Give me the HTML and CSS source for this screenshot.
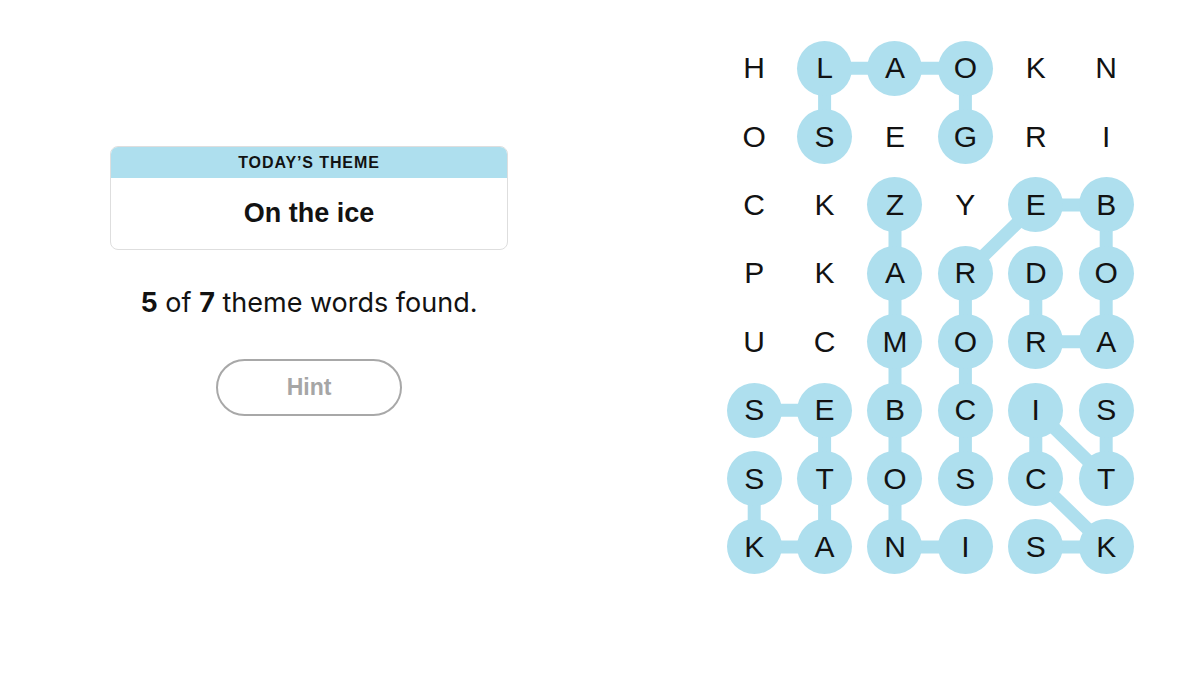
FILE: index.html
```html
<!DOCTYPE html>
<html lang="en">
<head>
<meta charset="utf-8">
<title>Strands</title>
<link rel="stylesheet" href="styles.css">
</head>
<body>
<main class="game">
  <section class="side">
    <div class="theme-card">
      <div class="theme-head">TODAY’S THEME</div>
      <div class="theme-body">On the ice</div>
    </div>
    <p class="progress"><b>5</b> of <b>7</b> theme words found.</p>
    <button class="hint" type="button">Hint</button>
  </section>
  <section class="board-wrap">
    <div class="board">
      <svg class="links" width="422.4" height="547.2" viewBox="0 0 422.4 547.2" aria-hidden="true">
        <g fill="none" stroke="#aedfee" stroke-width="13" stroke-linejoin="round" stroke-linecap="round">
          <polyline points="246.4,102.6 246.4,34.2 105.6,34.2 105.6,102.6"/>
          <polyline points="176,171 176,513 246.4,513"/>
          <polyline points="35.2,444.6 35.2,513 105.6,513 105.6,376.2 35.2,376.2"/>
          <polyline points="246.4,444.6 246.4,239.4 316.8,171 387.2,171 387.2,307.8 316.8,307.8 316.8,239.4"/>
          <polyline points="387.2,376.2 387.2,444.6 316.8,376.2 316.8,444.6 387.2,513 316.8,513"/>
        </g>
      </svg>
      <div class="grid">
        <span class="cell">H</span><span class="cell on">L</span><span class="cell on">A</span><span class="cell on">O</span><span class="cell">K</span><span class="cell">N</span>
        <span class="cell">O</span><span class="cell on">S</span><span class="cell">E</span><span class="cell on">G</span><span class="cell">R</span><span class="cell">I</span>
        <span class="cell">C</span><span class="cell">K</span><span class="cell on">Z</span><span class="cell">Y</span><span class="cell on">E</span><span class="cell on">B</span>
        <span class="cell">P</span><span class="cell">K</span><span class="cell on">A</span><span class="cell on">R</span><span class="cell on">D</span><span class="cell on">O</span>
        <span class="cell">U</span><span class="cell">C</span><span class="cell on">M</span><span class="cell on">O</span><span class="cell on">R</span><span class="cell on">A</span>
        <span class="cell on">S</span><span class="cell on">E</span><span class="cell on">B</span><span class="cell on">C</span><span class="cell on">I</span><span class="cell on">S</span>
        <span class="cell on">S</span><span class="cell on">T</span><span class="cell on">O</span><span class="cell on">S</span><span class="cell on">C</span><span class="cell on">T</span>
        <span class="cell on">K</span><span class="cell on">A</span><span class="cell on">N</span><span class="cell on">I</span><span class="cell on">S</span><span class="cell on">K</span>
      </div>
    </div>
  </section>
</main>
</body>
</html>
```
FILE: styles.css
```css
* { box-sizing: border-box; }
html, body { margin: 0; padding: 0; background: #fff; }
body {
  font-family: "Inter", "Liberation Sans", sans-serif;
  color: #121212;
  width: 1200px;
  height: 675px;
  overflow: hidden;
}
.game {
  display: flex;
  height: 675px;
}
.side {
  width: 618px;
  display: flex;
  flex-direction: column;
  align-items: center;
  padding-top: 146px;
}
.theme-card {
  width: 398px;
  border: 1px solid #dedede;
  border-radius: 8px;
  overflow: hidden;
}
.theme-head {
  height: 31px;
  background: #aedfee;
  display: flex;
  align-items: center;
  justify-content: center;
  font-family: "Liberation Sans", sans-serif;
  font-weight: 700;
  font-size: 16px;
  letter-spacing: 0.9px;
  color: #121212;
  margin: 0 -1px;
}
.theme-body {
  height: 71px;
  display: flex;
  align-items: center;
  justify-content: center;
  font-family: "Liberation Sans", sans-serif;
  font-weight: 700;
  font-size: 27px;
}
.progress {
  margin: 37px 0 0;
  font-size: 27px;
  line-height: 32px;
  font-weight: 400;
}
.progress b { font-weight: 700; }
.hint {
  margin-top: 40px;
  width: 186px;
  height: 57px;
  border: 2px solid #a8a8a8;
  border-radius: 29px;
  background: #fff;
  color: #a6a6a6;
  font-family: "Liberation Sans", sans-serif;
  font-weight: 700;
  font-size: 23px;
  padding: 0;
}
.board-wrap {
  padding-left: 101px;
  padding-top: 34px;
}
.board {
  position: relative;
  width: 422.4px;
  height: 547.2px;
}
.links {
  position: absolute;
  left: 0;
  top: 0;
}
.grid {
  position: relative;
  display: grid;
  grid-template-columns: repeat(6, 70.4px);
  grid-template-rows: repeat(8, 68.4px);
}
.cell {
  display: flex;
  align-items: center;
  justify-content: center;
  font-family: "Liberation Sans", sans-serif;
  font-size: 30px;
  color: #121212;
  position: relative;
  z-index: 0;
  isolation: isolate;
}
.cell.on::before {
  content: "";
  position: absolute;
  left: 50%;
  top: 50%;
  width: 55px;
  height: 55px;
  margin: -27.5px 0 0 -27.5px;
  border-radius: 50%;
  background: #aedfee;
  z-index: -1;
}
```
